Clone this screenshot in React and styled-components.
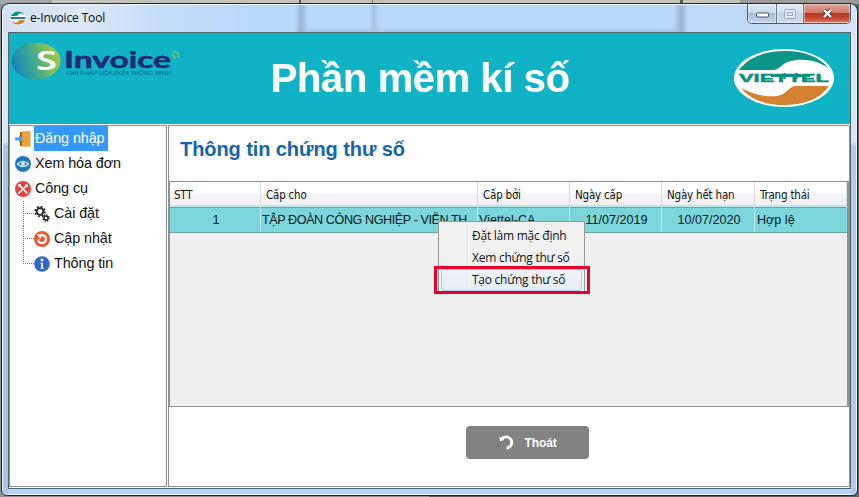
import React from "react";
import styled, { createGlobalStyle, css } from "styled-components";

const Global = createGlobalStyle`
  * { box-sizing: border-box; }
  body { margin: 0; background: #55585c; overflow: hidden; }
`;

const ARIAL = '"Liberation Sans", Arial, sans-serif';
const SEGOE = '"Open Sans", "Noto Sans", sans-serif';
const TAHOMA = '"DejaVu Sans Condensed", "DejaVu Sans", sans-serif';

const Desktop = styled.div`
  width: 859px;
  height: 497px;
  padding: 3px 1px 1px 1px;
  background:
    linear-gradient(90deg, transparent 299px, #55575a 299px 301px, transparent 301px 372px, #77797b 372px 373px, transparent 373px 680px, #55575a 680px 683px, transparent 683px) 0 0 / 100% 4px no-repeat,
    linear-gradient(90deg, #a5a5a5 0 52px, #c3c2bf 52px 740px, #9b9a98 740px) 0 0 / 100% 4px no-repeat,
    linear-gradient(90deg, #8e9296 0 50%, #5d6266 50%);
`;

const Window = styled.div`
  position: relative;
  display: flex;
  flex-direction: column;
  width: 857px;
  height: 493px;
  padding: 0 6px 6px;
  border: 1px solid #1c2833;
  border-radius: 8px 8px 6px 6px;
  background:
    linear-gradient(180deg, #dce9f7 0, #d3e4f6 138px, #a9c6e6 142px, #a9c6e6 100%) 0 0 / 6px 100% no-repeat,
    linear-gradient(180deg, #d5e4f6 0, #d3e4f6 138px, #b0cbea 142px, #b0cbea 100%) 100% 0 / 6px 100% no-repeat,
    #b7d7fb;
  box-shadow: inset 0 0 0 1px #f0f8ff;
`;

const TitleBar = styled.div`
  display: flex;
  flex: 0 0 27px;
  align-items: center;
  margin: 1px -5px 0;
  padding: 0 0 1px 7px;
  border-radius: 6px 6px 0 0;
  background:
    linear-gradient(90deg, transparent 292px, #98b5d6 298px, transparent 305px 366px, #a5c2e2 371px, transparent 376px 671px, #9bb5d2 678px, transparent 685px),
    linear-gradient(180deg, transparent 21px, rgba(140, 170, 205, 0.35) 27px) 296px 0 / 383px 100% no-repeat,
    linear-gradient(90deg, #d3e2f3 0, #dbe8f6 80px, #c3dcf7 160px, #b7d8fc 250px, #b7d8fc 660px, #c2daf5 760px, #d4e4f5 100%);
`;

const TitleText = styled.span`
  flex: 1;
  margin-left: 4px;
  color: #0b0d12;
  font: 12px/16px ${SEGOE};
  letter-spacing: -0.15px;
`;

const WindowButtons = styled.div`
  display: flex;
  align-self: flex-start;
  height: 20px;
  margin: -1px 5px 0 0;
  border: 1px solid #4c5a6b;
  border-top: 0;
  border-radius: 0 0 5px 5px;
  overflow: hidden;
`;

const WindowButton = styled.button`
  display: grid;
  place-items: center;
  width: ${(p) => p.$width}px;
  padding: 0;
  border: 0;
  border-left: ${(p) => (p.$first ? "0" : "1px solid #6d7c8e")};
  background: ${(p) =>
    p.$close
      ? "linear-gradient(180deg, #e2a597 0, #d07a68 45%, #b9341c 50%, #c8503a 80%, #dc8a74 100%)"
      : p.$muted
        ? "linear-gradient(180deg, #dfebf8, #cfdff2 48%, #c0d4eb 50%, #cee0f5)"
        : "linear-gradient(180deg, #dce9f7, #c5d7ec 48%, #a2bad6 50%, #c2d8f0)"};
  box-shadow: inset 0 0 0 1px rgba(255, 255, 255, 0.45);
`;

const Client = styled.div`
  display: flex;
  flex: 1;
  flex-direction: column;
  min-height: 0;
  border: 1px solid #56666f;
  background: #fff;
`;

const Banner = styled.header`
  display: grid;
  grid-template-columns: 200px 1fr 200px;
  flex: 0 0 91px;
  background: #10b2c6;
`;

const BrandSlot = styled.div`
  padding: ${(p) => p.$pad};
`;

const Heading = styled.h1`
  margin: 0;
  padding: 19px 19px 0 0;
  color: #fff;
  font: bold 40px/52px ${ARIAL};
  letter-spacing: -0.4px;
  text-align: center;
  white-space: nowrap;
`;

const Body = styled.div`
  display: grid;
  grid-template-columns: 158px 682px;
  gap: 1px;
  flex: 1;
  min-height: 0;
  padding: 1px 0;
`;

const Sidebar = styled.nav`
  border: 1px solid #8d8f91;
  padding: 0 0 0 5px;
`;

const TreeRow = styled.div`
  display: flex;
  align-items: center;
  height: 25px;
`;

const Branch = styled.div`
  margin-left: 8px;
  width: 11px;
  height: 25px;
  background:
    linear-gradient(#fff, #fff) 0 13px / 1px ${(p) => (p.$last ? "12px" : "0")} no-repeat,
    repeating-linear-gradient(180deg, #777 0 1px, transparent 1px 2px) 0 0 / 1px 100% no-repeat,
    repeating-linear-gradient(90deg, #777 0 1px, transparent 1px 2px) 0 12px / 100% 1px no-repeat;
`;

const TreeLabel = styled.span`
  height: 25px;
  margin-left: 3px;
  padding: 0 3px 0 1px;
  color: #111;
  font: 14.4px/25px ${ARIAL};
  letter-spacing: -0.1px;
  white-space: nowrap;
  ${(p) =>
    p.$active &&
    css`
      color: #fff;
      background: #3399ff;
    `}
`;

const Main = styled.main`
  display: flex;
  flex-direction: column;
  border: 1px solid #8d8f91;
`;

const SectionTitle = styled.h2`
  margin: 0;
  height: 55px;
  padding: 10px 0 0 11px;
  color: #1565ac;
  font: bold 20px/26px ${ARIAL};
  letter-spacing: -0.08px;
`;

const Table = styled.div`
  height: 226px;
  border: 1px solid #8d9496;
  border-right-width: 2px;
  border-top-color: #719da0;
  background: #efefef;
`;

const gridColumns = css`
  display: grid;
  grid-template-columns: 91px 217px 92px 92px 93px 1fr;
`;

const TableHead = styled.div`
  ${gridColumns}
  height: 25px;
  border-bottom: 2px solid #b9e8e9;
  background: linear-gradient(180deg, #fff 0, #fff 45%, #f4f5f7 55%, #f0f1f3 100%);
`;

const HeadCell = styled.div`
  padding-left: ${(p) => (p.$first ? 4 : 5)}px;
  border-right: 1px solid #d9dcdf;
  color: #111;
  font: 11.5px/26px ${TAHOMA};
  letter-spacing: -0.2px;
  white-space: nowrap;
`;

const TableRow = styled.div`
  ${gridColumns}
  height: 26px;
  border: solid #6fa2a6;
  border-width: 1px 0;
  background: #7dd5dc;
`;

const Cell = styled.div`
  padding-left: ${(p) => (p.$center ? 2 : p.$last ? 2 : 1)}px;
  border-right: 1px solid ${(p) => (p.$last ? "transparent" : "#b9eef0")};
  color: #0c1a1c;
  font: 12.6px/24px ${ARIAL};
  letter-spacing: ${(p) => p.$spacing || 0}px;
  text-align: ${(p) => (p.$center ? "center" : "left")};
  white-space: nowrap;
  overflow: hidden;
`;

const Footer = styled.div`
  display: flex;
  justify-content: center;
  padding: 19px 0 0 36px;
`;

const ExitButton = styled.button`
  display: flex;
  align-items: center;
  gap: 10px;
  width: 123px;
  height: 33px;
  padding: 0 0 0 32px;
  border: 0;
  border-radius: 4px;
  color: #fff;
  background: #828282;
  font: bold 12px/16px ${ARIAL};
  letter-spacing: -0.1px;
`;

const ContextMenu = styled.div`
  position: absolute;
  left: 436px;
  top: 217px;
  width: 147px;
  height: 73px;
  padding: 3px 2px;
  border: 1px solid #979797;
  background: linear-gradient(90deg, transparent 28px, #e0e0e0 28px 29px, #fff 29px 30px, transparent 30px) #f1f1f1;
`;

const MenuItem = styled.div`
  height: 22px;
  padding-left: 30px;
  border: 1px solid transparent;
  border-radius: 3px;
  color: #111;
  font: 12px/20px ${SEGOE};
  letter-spacing: -0.25px;
  white-space: nowrap;
  ${(p) =>
    p.$hover &&
    css`
      border-color: #b4cbe8;
      background: linear-gradient(180deg, rgba(240, 244, 250, 0.7), rgba(226, 236, 248, 0.8));
    `}
`;

const Highlight = styled.div`
  position: absolute;
  left: 432px;
  top: 262px;
  width: 156px;
  height: 28px;
  border: 3px solid #e8002a;
`;

const ViettelMark = ({ width, height, small }) => (
  <svg width={width} height={height} viewBox="0 0 100 58" preserveAspectRatio="none">
    <ellipse cx="50" cy="29" rx="50" ry="29" fill="#fff" />
    <path d="M5 21C15 7 33 2 51 2C71 2 86 8 94 19C84 11 68 9 57 12C48 14 46 20 40 21Z" fill="#0a9587" />
    <path d="M7 39C22 47 38 49 47 46C54 43 55 38 61 37H95C85 51 69 56 50 56C32 56 17 51 7 39Z" fill="#d4822f" />
    {small ? (
      <path d="M4 25H96V33H4Z" fill="#1a7f82" />
    ) : (
      <text x="5" y="32.6" fontFamily={ARIAL} fontSize="10" fontWeight="bold" textLength="90" lengthAdjust="spacingAndGlyphs" fill="#0a8f82" stroke="#0a8f82" strokeWidth=".4">
        VIETTEL
      </text>
    )}
    {!small && <path d="M37 27H76M50.500 24V30M62.500 24V30" stroke="#0a8f82" strokeWidth="2.2" />}
  </svg>
);

const InvoiceLogo = () => (
  <svg width="176" height="46" viewBox="0 0 176 46">
    <defs>
      <linearGradient id="orb" x1="0" y1=".6" x2="1" y2=".35">
        <stop offset="0" stopColor="#1583bb" />
        <stop offset=".4" stopColor="#38a795" />
        <stop offset=".75" stopColor="#7cc05a" />
        <stop offset="1" stopColor="#a6cb45" />
      </linearGradient>
    </defs>
    <ellipse cx="25" cy="23" rx="24.5" ry="18.3" fill="url(#orb)" />
    <text x="25" y="31.6" fontFamily='"Noto Sans", sans-serif' fontSize="27" fontWeight="600" textLength="21" lengthAdjust="spacingAndGlyphs" fill="#fff">S</text>
    <text x="53" y="30" fontFamily='Lato, sans-serif' fontSize="22" fontWeight="bold" textLength="107" lengthAdjust="spacingAndGlyphs" fill="#1e2b74" stroke="#1e2b74" strokeWidth=".5">Invoice</text>
    <text x="55" y="37" fontFamily={ARIAL} fontSize="6" textLength="105" lengthAdjust="spacingAndGlyphs" fill="#155f86">GIẢI PHÁP HÓA ĐƠN THÔNG MINH</text>
    <path d="M160 17q4 0 4 4M161.500 13.500q6 0 6 6" fill="none" stroke="#7cc452" strokeWidth="1.7" />
  </svg>
);

const DoorIcon = () => (
  <svg width="16" height="16" viewBox="0 0 16 16">
    <path d="M5 1H15V15H5Z" fill="#7a5230" />
    <path d="M6.500 0.500H12V15.500H6.500Z" fill="#e8952a" />
    <path d="M8 0.500L15.500 0V16L8 15Z" fill="#f0a232" />
    <path d="M0 6.500H4V4L8.500 8L4 12V9.500H0Z" fill="#46a8dc" />
  </svg>
);

const EyeIcon = () => (
  <svg width="16" height="16" viewBox="0 0 16 16">
    <circle cx="8" cy="8" r="8" fill="#1e78bd" />
    <path d="M2.500 8Q8 2.500 13.500 8Q8 13 2.500 8Z" fill="#1e78bd" stroke="#e4f2fb" strokeWidth="1.100" />
    <circle cx="8" cy="7.800" r="1.900" fill="#e4f2fb" />
  </svg>
);

const ToolsIcon = () => (
  <svg width="16" height="16" viewBox="0 0 16 16">
    <circle cx="8" cy="8" r="8" fill="#e8413f" />
    <path d="M4 4L12 12M12 4L4 12" stroke="#fff" strokeWidth="1.600" strokeLinecap="round" />
    <path d="M3.300 5.500L5.500 3.300M10.800 3.200V5.200H12.900M3.500 11.200L4.800 12.600M10.500 12L12 10.500" stroke="#fff" strokeWidth="1.500" fill="none" />
  </svg>
);

const GearsIcon = () => (
  <svg width="16" height="16" viewBox="0 0 16 16" fill="none" stroke="#222">
    <circle cx="6" cy="5.500" r="3.300" strokeWidth="1.800" />
    <circle cx="6" cy="5.500" r="4.900" strokeWidth="1.700" strokeDasharray="1.900 1.950" />
    <circle cx="12" cy="12" r="2" strokeWidth="1.400" />
    <circle cx="12" cy="12" r="3.200" strokeWidth="1.300" strokeDasharray="1.300 1.210" />
  </svg>
);

const UpdateIcon = () => (
  <svg width="16" height="16" viewBox="0 0 16 16">
    <circle cx="8" cy="8" r="8" fill="#e8582c" />
    <path d="M6.500 4.300A4 4 0 1 1 4 8.500" fill="none" stroke="#fff" strokeWidth="2.200" />
    <path d="M3 3.200L8.500 2.800L6.300 8Z" fill="#fff" />
  </svg>
);

const InfoIcon = () => (
  <svg width="16" height="16" viewBox="0 0 16 16">
    <circle cx="8" cy="8" r="7.800" fill="#2d67cf" />
    <circle cx="8" cy="4" r="1.400" fill="#fff" />
    <path d="M6.300 6.700H9V12H10V12.800H6.200V12H7.200V7.500H6.300Z" fill="#fff" />
  </svg>
);

const treeItems = [
  { label: "Đăng nhập", Icon: DoorIcon, active: true },
  { label: "Xem hóa đơn", Icon: EyeIcon },
  { label: "Công cụ", Icon: ToolsIcon },
  { label: "Cài đặt", Icon: GearsIcon, child: true },
  { label: "Cập nhật", Icon: UpdateIcon, child: true },
  { label: "Thông tin", Icon: InfoIcon, child: true, last: true },
];

const columns = ["STT", "Cấp cho", "Cấp bởi", "Ngày cấp", "Ngày hết hạn", "Trạng thái"];

export default function App() {
  return (
    <Desktop>
      <Global />
      <Window>
        <TitleBar>
          <ViettelMark width={16} height={14} small />
          <TitleText>e-Invoice Tool</TitleText>
          <WindowButtons>
            <WindowButton $width={28} $first aria-label="Minimize">
              <svg width="13" height="9">
                <rect x=".5" y="4" width="12" height="4" rx="1" fill="#fff" stroke="#4c5665" />
              </svg>
            </WindowButton>
            <WindowButton $width={27} $muted aria-label="Maximize">
              <svg width="12" height="10" fill="#e6eef7" stroke="#94a7bd">
                <rect x=".5" y=".5" width="11" height="9" rx="1" />
                <rect x="3.500" y="3.500" width="5" height="3" />
              </svg>
            </WindowButton>
            <WindowButton $width={47} $close aria-label="Close">
              <svg width="13" height="11" viewBox="0 0 13 11">
                <path d="M3 2L10 9M10 2L3 9" stroke="#5c3a3e" strokeWidth="4.200" />
                <path d="M3 2L10 9M10 2L3 9" stroke="#fff" strokeWidth="2.400" />
              </svg>
            </WindowButton>
          </WindowButtons>
        </TitleBar>
        <Client>
          <Banner>
            <BrandSlot $pad="5px 0 0 2px">
              <InvoiceLogo />
            </BrandSlot>
            <Heading>Phần mềm kí số</Heading>
            <BrandSlot $pad="16px 0 0 84px">
              <ViettelMark width={100} height={58} />
            </BrandSlot>
          </Banner>
          <Body>
            <Sidebar>
              {treeItems.map(({ label, Icon, active, child, last }) => (
                <TreeRow key={label}>
                  {child && <Branch $last={last} />}
                  <Icon />
                  <TreeLabel $active={active}>{label}</TreeLabel>
                </TreeRow>
              ))}
            </Sidebar>
            <Main>
              <SectionTitle>Thông tin chứng thư số</SectionTitle>
              <Table>
                <TableHead>
                  {columns.map((c, i) => (
                    <HeadCell key={c} $first={i === 0}>{c}</HeadCell>
                  ))}
                </TableHead>
                <TableRow>
                  <Cell $center>1</Cell>
                  <Cell $spacing={-0.42}>TẬP ĐOÀN CÔNG NGHIỆP - VIỄN TH...</Cell>
                  <Cell>Viettel-CA</Cell>
                  <Cell $center>11/07/2019</Cell>
                  <Cell $center>10/07/2020</Cell>
                  <Cell $last>Hợp lệ</Cell>
                </TableRow>
              </Table>
              <Footer>
                <ExitButton>
                  <svg width="17" height="17" viewBox="0 0 17 17">
                    <path d="M3.500 5.200A5.600 5.600 0 1 1 8.500 14" fill="none" stroke="#fff" strokeWidth="2.800" />
                    <path d="M1.300 2.500L2.200 7.300L6.300 6Z" fill="#fff" />
                  </svg>
                  Thoát
                </ExitButton>
              </Footer>
            </Main>
          </Body>
        </Client>
        <ContextMenu>
          <MenuItem>Đặt làm mặc định</MenuItem>
          <MenuItem>Xem chứng thư số</MenuItem>
          <MenuItem $hover>Tạo chứng thư số</MenuItem>
        </ContextMenu>
        <Highlight />
      </Window>
    </Desktop>
  );
}
